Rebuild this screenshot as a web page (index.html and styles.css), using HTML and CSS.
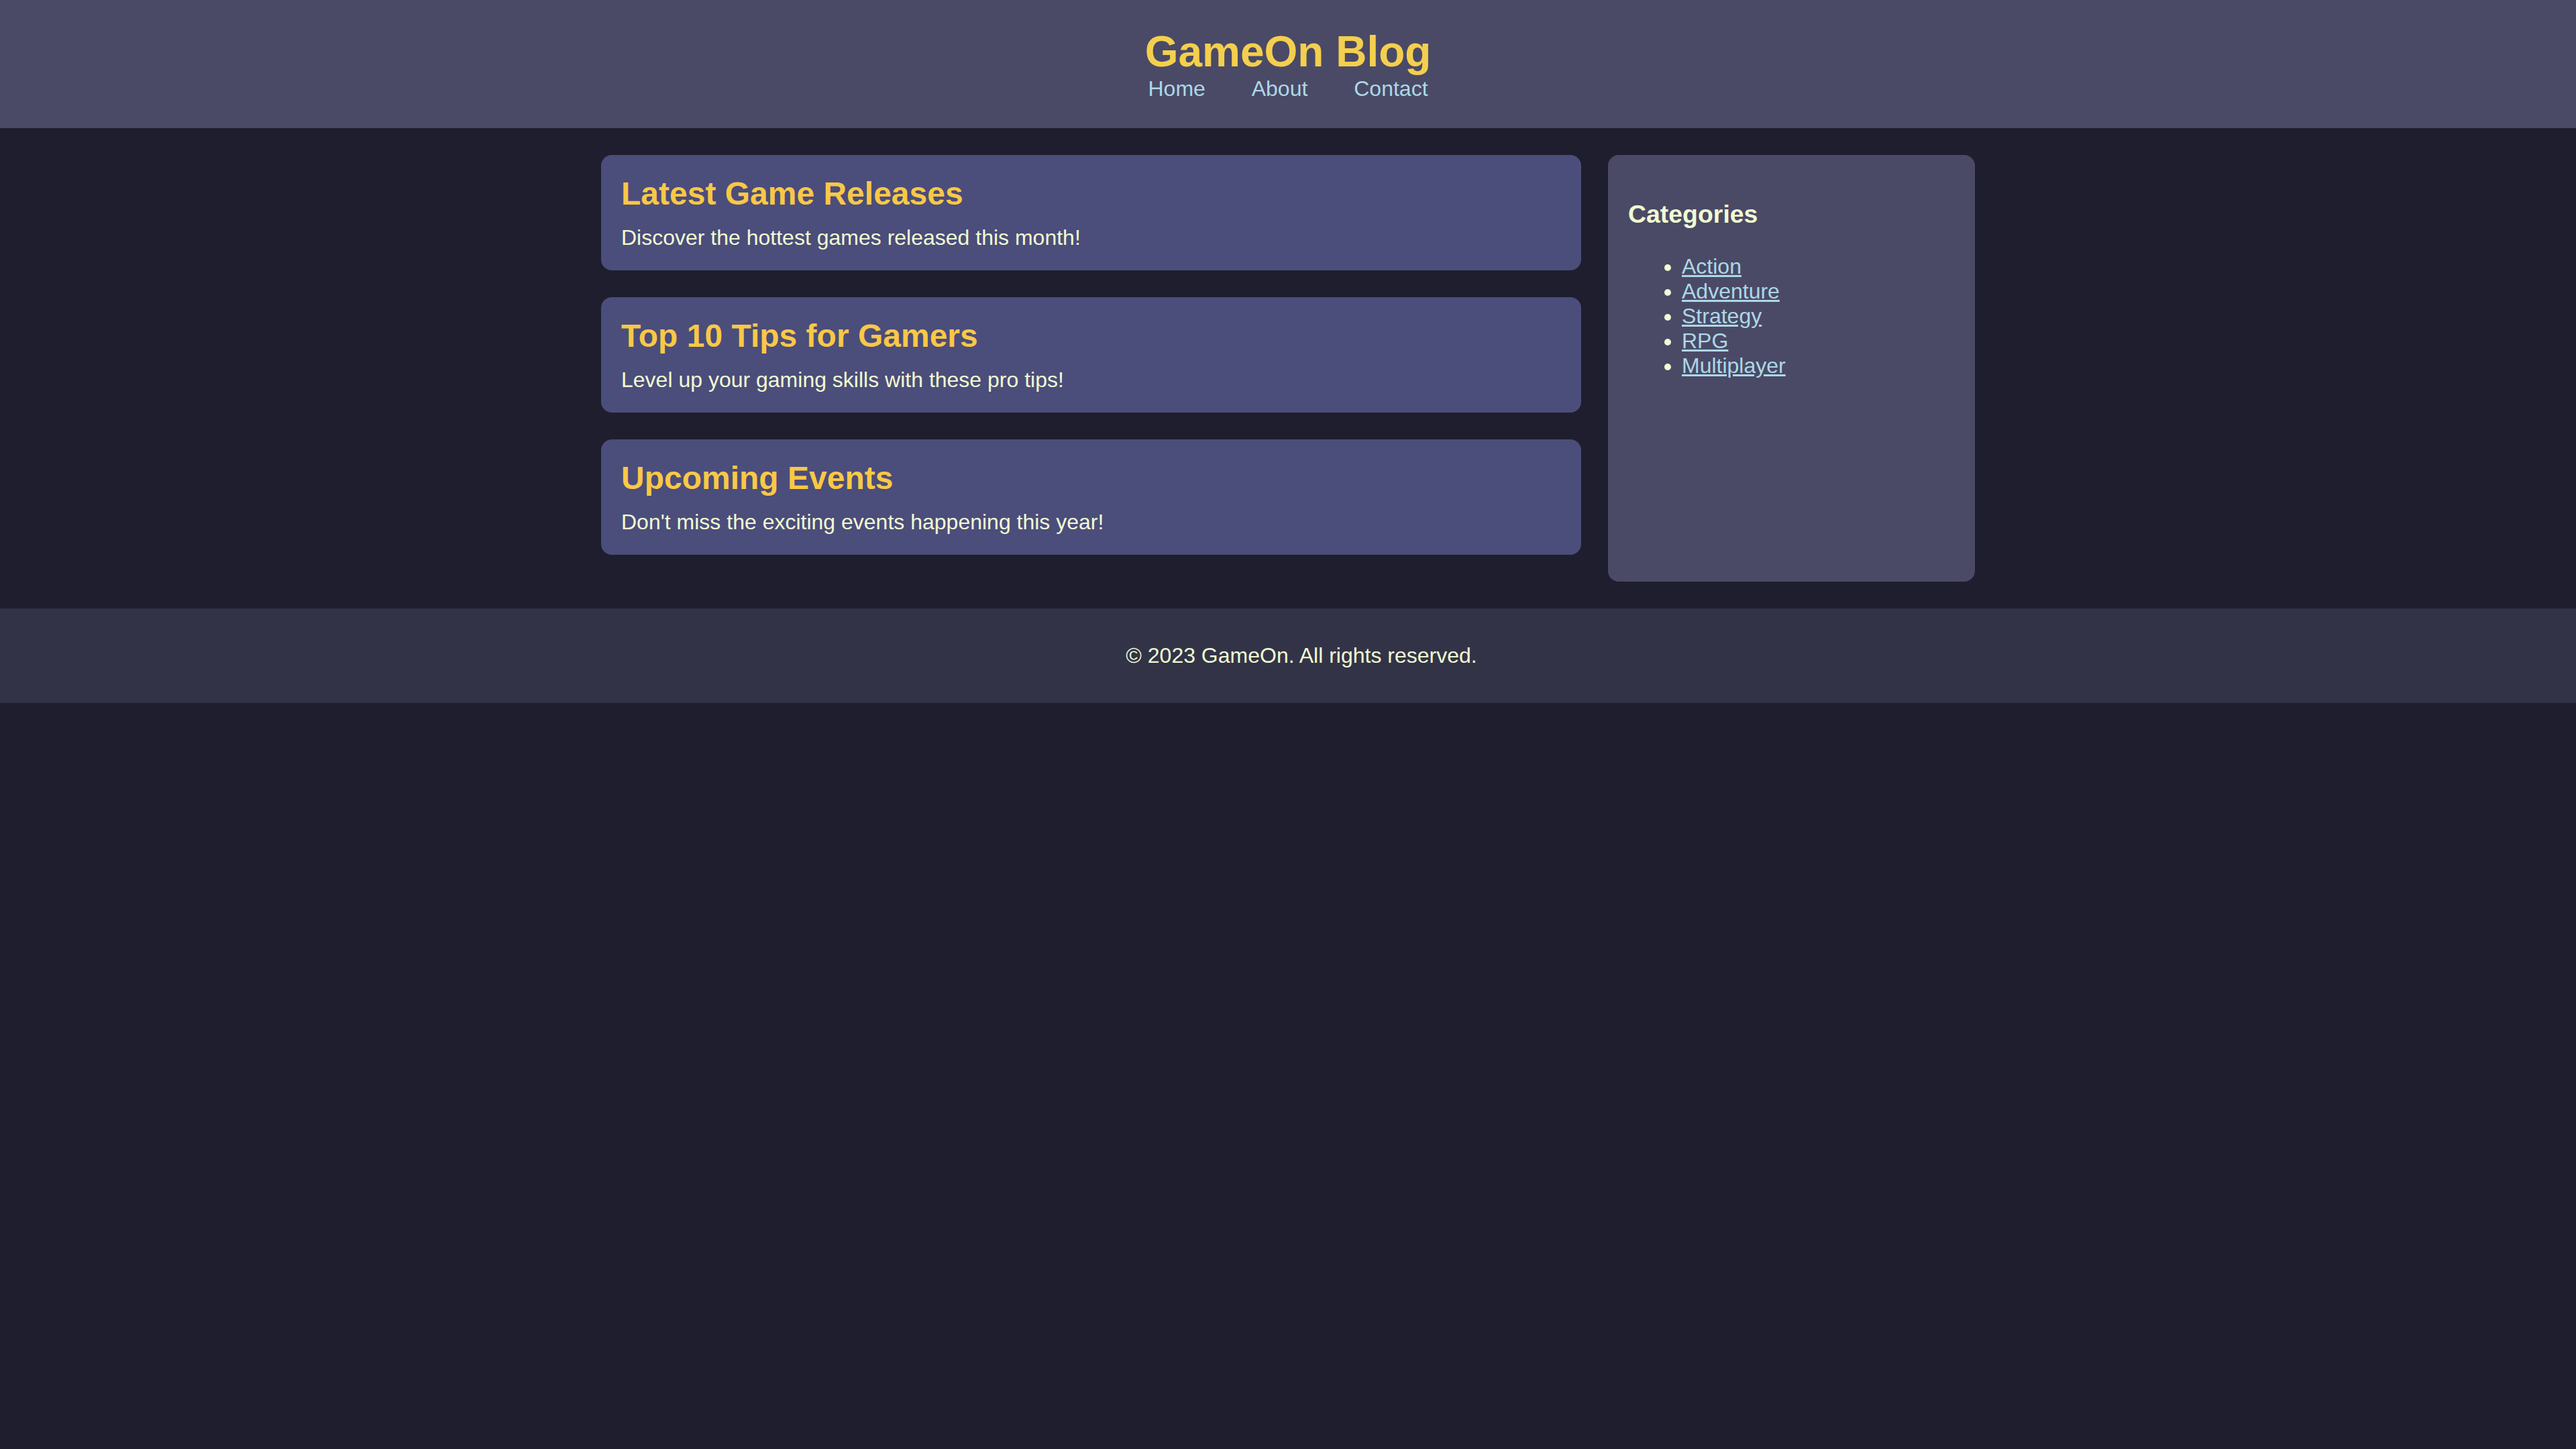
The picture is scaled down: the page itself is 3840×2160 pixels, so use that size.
FILE: index.html
```html
<!DOCTYPE html>
<html lang="en">
<head>
<meta charset="utf-8">
<title>GameOn Blog</title>
<link rel="stylesheet" href="styles.css">
</head>
<body>
<header class="site-header">
  <h1 class="site-title">GameOn Blog</h1>
  <nav class="site-nav">
    <a href="#">Home</a>
    <a href="#">About</a>
    <a href="#">Contact</a>
  </nav>
</header>
<div class="container">
  <main class="posts">
    <article class="post">
      <h2 class="post-title">Latest Game Releases</h2>
      <p class="post-text">Discover the hottest games released this month!</p>
    </article>
    <article class="post">
      <h2 class="post-title">Top 10 Tips for Gamers</h2>
      <p class="post-text">Level up your gaming skills with these pro tips!</p>
    </article>
    <article class="post">
      <h2 class="post-title">Upcoming Events</h2>
      <p class="post-text">Don't miss the exciting events happening this year!</p>
    </article>
  </main>
  <aside class="sidebar">
    <h3 class="sidebar-title">Categories</h3>
    <ul class="category-list">
      <li><a href="#">Action</a></li>
      <li><a href="#">Adventure</a></li>
      <li><a href="#">Strategy</a></li>
      <li><a href="#">RPG</a></li>
      <li><a href="#">Multiplayer</a></li>
    </ul>
  </aside>
</div>
<footer class="site-footer">
  <p class="footer-text">&copy; 2023 GameOn. All rights reserved.</p>
</footer>
</body>
</html>
```
FILE: styles.css
```css
body {
  margin: 0;
  background: #1f1e2e;
  color: #f2fcd2;
  font-family: "Liberation Sans", Arial, sans-serif;
  font-size: 32px;
}

.site-header {
  background: #4a4a67;
  padding: 40px;
  text-align: center;
}

.site-title {
  margin: 0;
  font-size: 64px;
  color: #f4cf4e;
}

.site-nav a {
  color: #add8e6;
  text-decoration: none;
  margin: 0 30px;
}

.container {
  display: flex;
  gap: 40px;
  max-width: 2048px;
  margin: 0 auto;
  padding: 40px;
}

.posts {
  flex: 3;
}

.post {
  background: #4b4d7b;
  border-radius: 16px;
  padding: 30px;
  margin-bottom: 40px;
}

.post-title {
  margin: 0 0 20px;
  font-size: 48px;
  color: #f9c846;
}

.post-text {
  margin: 0;
}

.sidebar {
  flex: 1;
  background: #4a4a67;
  border-radius: 16px;
  padding: 30px;
}

.sidebar-title {
  font-size: 37.44px;
  margin: 37.44px 0;
}

.category-list {
  margin: 32px 0;
  padding-left: 80px;
}

.category-list a {
  color: #add8e6;
}

.site-footer {
  background: #333348;
  padding: 20px 0 20px 40px;
  text-align: center;
}

.footer-text {
  margin: 32px 0;
}
```
